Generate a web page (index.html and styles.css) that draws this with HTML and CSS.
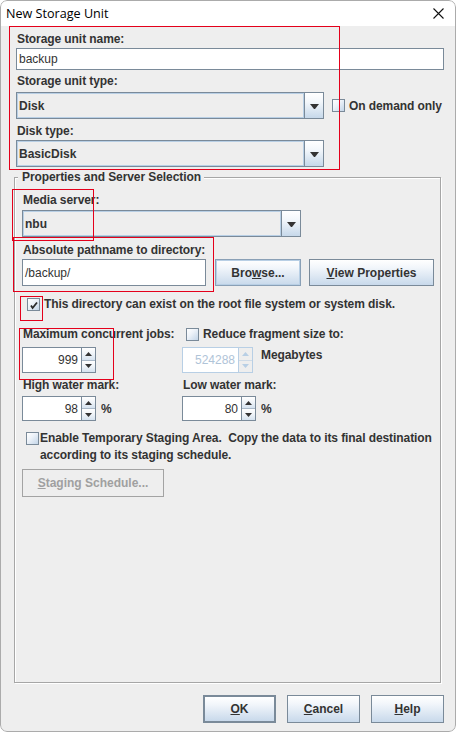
FILE: index.html
```html
<!DOCTYPE html>
<html>
<head>
<meta charset="utf-8">
<title>New Storage Unit</title>
<link rel="stylesheet" href="styles.css">
</head>
<body>
<div class="window">
  <div class="titlebar">
    <span class="title">New Storage Unit</span>
    <svg class="close" width="11" height="11" viewBox="0 0 11 11"><path d="M0.5 0.5 L10.5 10.5 M10.5 0.5 L0.5 10.5" stroke="#111" stroke-width="1.1" fill="none"/></svg>
  </div>
  <div class="content">
    <div class="top">
      <div class="label l1">Storage unit name:</div>
      <div class="textfield tf-name">backup</div>
      <div class="label l2">Storage unit type:</div>
      <div class="row-type">
        <div class="combo combo-main"><span class="combo-text">Disk</span><span class="combo-btn"><svg width="9" height="5" viewBox="0 0 9 5"><polygon points="0,0 9,0 5,5 4,5" fill="#333"/></svg></span></div>
        <div class="check check-demand"><span class="box"></span><span class="check-text">On demand only</span></div>
      </div>
      <div class="label l3">Disk type:</div>
      <div class="combo combo-main combo-disk"><span class="combo-text">BasicDisk</span><span class="combo-btn"><svg width="9" height="5" viewBox="0 0 9 5"><polygon points="0,0 9,0 5,5 4,5" fill="#333"/></svg></span></div>
    </div>

    <div class="group">
      <div class="group-title">Properties and Server Selection</div>
      <div class="label lbl-media">Media server:</div>
      <div class="combo combo-media"><span class="combo-text">nbu</span><span class="combo-btn"><svg width="9" height="5" viewBox="0 0 9 5"><polygon points="0,0 9,0 5,5 4,5" fill="#333"/></svg></span></div>
      <div class="label lbl-path">Absolute pathname to directory:</div>
      <div class="path-row">
        <div class="textfield tf-path">/backup/</div>
        <div class="btn btn-browse">Bro<u>w</u>se...</div>
        <div class="btn btn-view"><u>V</u>iew Properties</div>
      </div>
      <div class="check check-root"><span class="box checked"><svg width="11" height="11" viewBox="0 0 11 11"><path d="M3 6.5 L4.6 9 L9 3.5" stroke="#2b2b2b" stroke-width="1.8" fill="none" stroke-linejoin="miter"/></svg></span><span class="check-text">This directory can exist on the root file system or system disk.</span></div>
      <div class="two-col jobs-labels">
        <div class="label">Maximum concurrent jobs:</div>
        <div class="check check-reduce"><span class="box"></span><span class="check-text">Reduce fragment size to:</span></div>
      </div>
      <div class="two-col spin-row1">
        <div class="spinner spin-jobs"><span class="spin-field">999</span><span class="spin-btns"><span class="sb sb-up"><svg width="7" height="4" viewBox="0 0 7 4"><polygon points="3.5,0 7,4 0,4" fill="#333"/></svg></span><span class="sb sb-down"><svg width="7" height="4" viewBox="0 0 7 4"><polygon points="0,0 7,0 3.5,4" fill="#333"/></svg></span></span></div>
        <div class="frag">
          <div class="spinner spin-frag disabled"><span class="spin-field">524288</span><span class="spin-btns"><span class="sb sb-up"><svg width="7" height="4" viewBox="0 0 7 4"><polygon points="3.5,0 7,4 0,4" fill="#b8cfe5"/></svg></span><span class="sb sb-down"><svg width="7" height="4" viewBox="0 0 7 4"><polygon points="0,0 7,0 3.5,4" fill="#b8cfe5"/></svg></span></span></div>
          <span class="label unit">Megabytes</span>
        </div>
      </div>
      <div class="two-col lbl-water">
        <div class="label">High water mark:</div>
        <div class="label">Low water mark:</div>
      </div>
      <div class="two-col spin-row2">
        <div class="water">
          <div class="spinner spin-water"><span class="spin-field">98</span><span class="spin-btns"><span class="sb sb-up"><svg width="7" height="4" viewBox="0 0 7 4"><polygon points="3.5,0 7,4 0,4" fill="#333"/></svg></span><span class="sb sb-down"><svg width="7" height="4" viewBox="0 0 7 4"><polygon points="0,0 7,0 3.5,4" fill="#333"/></svg></span></span></div>
          <span class="label pct">%</span>
        </div>
        <div class="water">
          <div class="spinner spin-water"><span class="spin-field">80</span><span class="spin-btns"><span class="sb sb-up"><svg width="7" height="4" viewBox="0 0 7 4"><polygon points="3.5,0 7,4 0,4" fill="#333"/></svg></span><span class="sb sb-down"><svg width="7" height="4" viewBox="0 0 7 4"><polygon points="0,0 7,0 3.5,4" fill="#333"/></svg></span></span></div>
          <span class="label pct">%</span>
        </div>
      </div>
      <div class="staging">
        <span class="box"></span>
        <span class="staging-text">Enable Temporary Staging Area.&nbsp; Copy the data to its final destination<br>according to its staging schedule.</span>
      </div>
      <div class="btn btn-staging disabled"><u>S</u>taging Schedule...</div>
    </div>

    <div class="buttons">
      <div class="btn btn-dlg btn-ok"><u>O</u>K</div>
      <div class="btn btn-dlg"><u>C</u>ancel</div>
      <div class="btn btn-dlg"><u>H</u>elp</div>
    </div>
  </div>

  <div class="mark m1"></div>
  <div class="mark m2"></div>
  <div class="mark m3"></div>
  <div class="mark m4"></div>
  <div class="mark m5"></div>
</div>
</body>
</html>
```

FILE: styles.css
```css
* { box-sizing: border-box; }
html, body { margin: 0; padding: 0; }
body {
  width: 456px;
  height: 732px;
  overflow: hidden;
  background: #ffffff;
  font-family: "Liberation Sans", Arial, sans-serif;
  font-size: 12px;
  color: #333333;
}
u { text-decoration: underline; text-underline-offset: 1px; }

.window {
  position: relative;
  width: 456px;
  height: 732px;
  background: #eeeeee;
  border-radius: 7px;
  overflow: hidden;
  display: flex;
  flex-direction: column;
}
.window::after {
  content: "";
  position: absolute;
  inset: 0;
  border: 1px solid #ababab;
  border-radius: 7px;
  pointer-events: none;
}

.titlebar {
  flex: none;
  height: 26px;
  background: #ffffff;
  display: flex;
  align-items: center;
  justify-content: space-between;
  padding: 0 12px 0 6px;
}
.title {
  font-family: "Open Sans", "Noto Sans", sans-serif;
  font-size: 12.6px;
  color: #000000;
}
.close { display: block; }

.content {
  flex: 1;
  display: flex;
  flex-direction: column;
}

.label {
  display: block;
  height: 16px;
  line-height: 16px;
  font-weight: bold;
  padding-left: 1px;
  white-space: nowrap;
  letter-spacing: -0.08px;
}

/* top section */
.top {
  display: flex;
  flex-direction: column;
  padding: 0 12px 0 16px;
}
.l1 { margin-top: 5px; }
.l2 { margin-top: 3px; }
.l3 { margin-top: 4px; }

.textfield {
  background: #ffffff;
  border: 1px solid #7a8a99;
  padding-left: 2px;
  display: flex;
  align-items: center;
  white-space: nowrap;
}
.tf-name { margin-top: 1px; height: 22px; }

.row-type {
  margin-top: 3px;
  display: flex;
  align-items: center;
  height: 27px;
}

.combo {
  display: flex;
  height: 27px;
  border: 1px solid #7a8a99;
  background: #eeeeee;
}
.combo-main { width: 308px; flex: none; }
.combo-disk { margin-top: 1px; }
.combo-text {
  flex: 1;
  border: 1px solid #b8cfe5;
  padding-left: 1px;
  font-weight: bold;
  display: flex;
  align-items: center;
}
.combo-btn {
  width: 19px;
  flex: none;
  border-left: 1px solid #7a8a99;
  background: linear-gradient(to bottom, #ffffff 0%, #f3f7fb 35%, #c6d8ea 100%);
  display: flex;
  align-items: center;
  justify-content: center;
  padding-top: 1px;
}
.combo-btn svg { display: block; }

.check {
  display: flex;
  align-items: center;
  white-space: nowrap;
}
.box {
  flex: none;
  width: 13px;
  height: 13px;
  border: 1px solid #7a8a99;
  background: linear-gradient(135deg, #ffffff 0%, #eef3f9 40%, #c3d5e8 100%);
  display: flex;
  align-items: center;
  justify-content: center;
}
.box svg { display: block; }
.check-text { font-weight: bold; margin-left: 4px; letter-spacing: -0.08px; }
.check-demand { margin-left: 8px; }

/* group */
.group {
  margin: 10px 0 0 14px;
  width: 427px;
  height: 506px;
  flex: none;
  border: 1px solid #a6a6a6;
  box-shadow: inset 1px 1px 0 #ffffff, 1px 1px 0 #ffffff;
  padding-left: 7px;
  display: flex;
  flex-direction: column;
  align-items: flex-start;
}
.group-title {
  margin: -9px 0 0 -4px;
  padding: 0 3px 0 4px;
  background: #eeeeee;
  height: 16px;
  line-height: 16px;
  font-weight: bold;
  white-space: nowrap;
  letter-spacing: -0.08px;
}
.lbl-media { margin-top: 7px; }
.combo-media { margin-top: 2px; width: 279px; }
.lbl-path { margin-top: 5px; }

.path-row {
  margin-top: 1px;
  display: flex;
  height: 27px;
}
.tf-path { width: 184px; height: 27px; }

.btn {
  height: 27px;
  border: 1px solid #7a8a99;
  background: linear-gradient(to bottom, #ffffff 0%, #f2f6fb 30%, #c8d9eb 100%);
  display: flex;
  align-items: center;
  justify-content: center;
  font-weight: bold;
  white-space: nowrap;
}
.btn-browse {
  margin-left: 9px;
  width: 86px;
  border-color: #8aa0b6;
  box-shadow: inset 0 0 0 1px #b8cfe5;
}
.btn-view { margin-left: 8px; width: 125px; }

.check-root {
  margin-top: 10px;
  height: 16px;
  padding-left: 5px;
}
.check-root .check-text { margin-left: 4px; }

.two-col {
  display: grid;
  grid-template-columns: 160px auto;
  align-self: stretch;
}
.jobs-labels { margin-top: 14px; height: 16px; }
.check-reduce { padding-left: 4px; }

.spin-row1 { margin-top: 5px; height: 26px; }
.lbl-water { margin-top: 4px; height: 16px; }
.spin-row2 { margin-top: 3px; height: 25px; }

.spinner {
  display: flex;
  height: 100%;
}
.spin-field {
  background: #ffffff;
  border: 1px solid #7a8a99;
  display: flex;
  align-items: center;
  justify-content: flex-end;
  padding-right: 3px;
}
.spin-btns {
  width: 14px;
  display: flex;
  flex-direction: column;
  border: 1px solid #7a8a99;
  border-left: none;
  background: #ffffff;
}
.sb {
  flex: 1;
  display: flex;
  align-items: center;
  justify-content: center;
  background: linear-gradient(to bottom, #ffffff 0%, #eef3f8 50%, #d5e2ef 100%);
}
.sb svg { display: block; }
.sb-up { border-bottom: 1px solid #a9b8c7; }

.spin-jobs .spin-field { width: 60px; }
.frag { display: flex; align-items: flex-start; height: 26px; }
.spin-frag { width: 71px; }
.spin-frag .spin-field { width: 57px; border-color: #b8cfe5; color: #b0c4d8; }
.spin-frag .spin-btns { border-color: #b8cfe5; background: #eeeeee; }
.spin-frag .sb { background: #eeeeee; }
.spin-frag .sb-up { border-bottom-color: #cfdbe7; }
.unit { margin-left: 7px; }

.water { display: flex; align-items: center; height: 25px; }
.spin-water { width: 74px; }
.spin-water .spin-field { width: 60px; }
.pct { margin-left: 4px; }

.staging {
  margin-top: 9px;
  padding-left: 4px;
  display: flex;
  align-items: flex-start;
}
.staging .box { margin-top: 2px; }
.staging-text {
  margin-left: 1px;
  font-weight: bold;
  line-height: 17px;
  white-space: nowrap;
  letter-spacing: -0.08px;
}

.btn-staging {
  margin-top: 5px;
  width: 142px;
  height: 28px;
}
.btn.disabled {
  background: #eeeeee;
  border-color: #a3a3a3;
  color: #a0a0a0;
}

.buttons {
  margin-top: 12px;
  display: flex;
  justify-content: flex-end;
  gap: 11px;
  padding-right: 12px;
}
.btn-dlg { width: 73px; height: 28px; }
.btn-ok { border: 2px solid #7a8a99; }

/* red annotation frames drawn over the dialog */
.mark {
  position: absolute;
  border: 1px solid #e4001b;
  pointer-events: none;
}
.m1 { left: 9px; top: 26px; width: 331px; height: 144px; }
.m2 { left: 12px; top: 189px; width: 82px; height: 52px; }
.m3 { left: 13px; top: 237px; width: 201px; height: 55px; }
.m4 { left: 20px; top: 296px; width: 23px; height: 25px; }
.m5 { left: 19px; top: 328px; width: 95px; height: 52px; }
```
